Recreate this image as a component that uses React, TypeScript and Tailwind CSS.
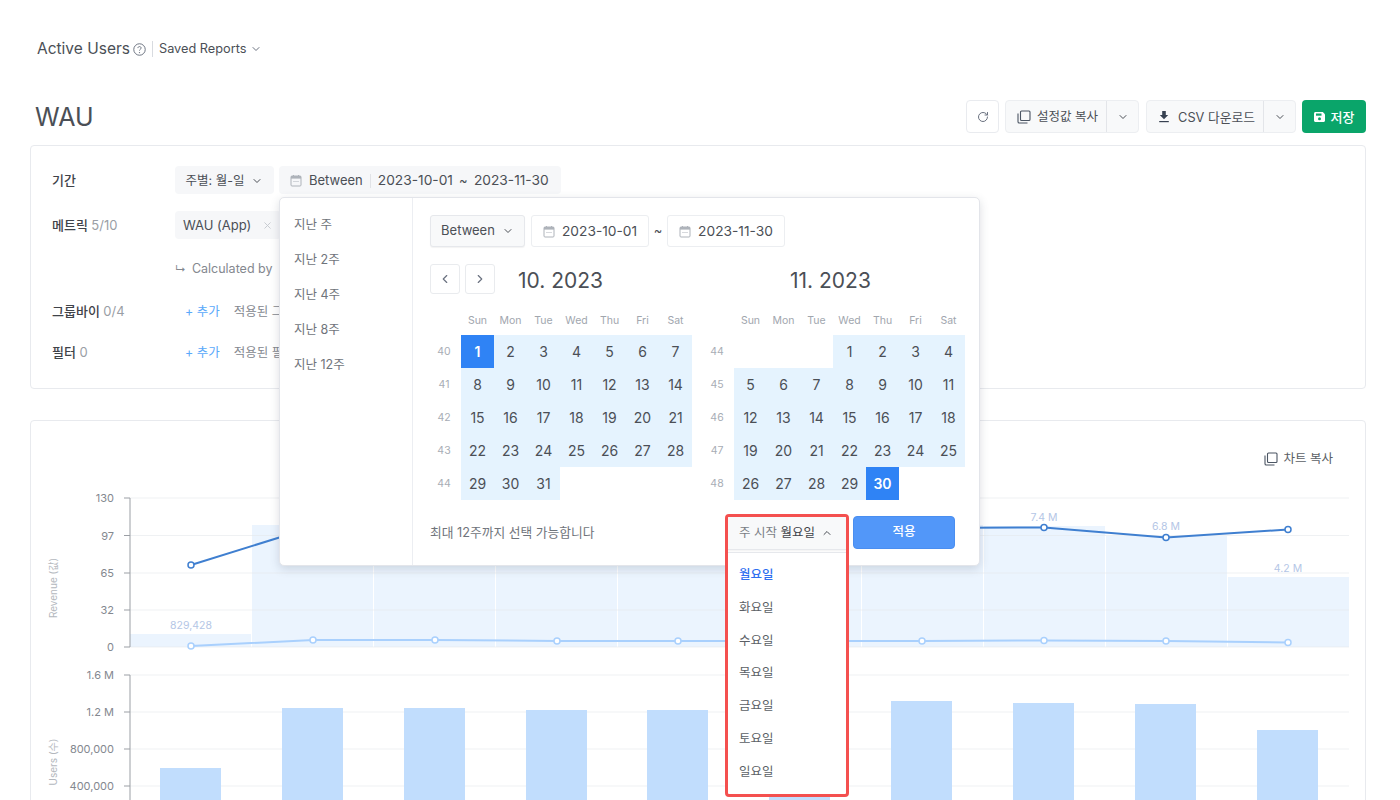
import React from "react";
import { ChevronDown, ChevronUp, ChevronLeft, ChevronRight, RotateCw, X } from "lucide-react";

const Cal = ({ c = "#aeb3ba" }: { c?: string }) => (
  <svg width="12" height="13" viewBox="0 0 12 13" fill="none" className="shrink-0">
    <rect x="1" y="2" width="10" height="10" rx="1" stroke={c} strokeWidth="1" />
    <rect x="1" y="2" width="10" height="2.6" fill={c} />
    <path d="M3.5 7.5h5" stroke={c} strokeWidth="1" strokeDasharray="1 1" />
    <path d="M3.5 1v1.5M8.5 1v1.5" stroke={c} strokeWidth="1" />
  </svg>
);

const CopyIcon = () => (
  <svg width="14" height="14" viewBox="0 0 14 14" fill="none" className="shrink-0">
    <rect x="3.5" y="1" width="9.5" height="9.5" rx="1" stroke="#4b5563" strokeWidth="1.1" />
    <path d="M1 3.5v8.2c0 .7.6 1.3 1.3 1.3h8.2" stroke="#4b5563" strokeWidth="1.1" />
  </svg>
);

const DownloadIcon = () => (
  <svg width="12" height="13" viewBox="0 0 12 13" className="shrink-0">
    <path d="M4.2 1h3.6v4h2.4L6 9.2 1.8 5h2.4z" fill="#374151" />
    <rect x="1.2" y="11" width="9.6" height="1.2" fill="#374151" />
  </svg>
);

const SaveIcon = () => (
  <svg width="12" height="12" viewBox="0 0 12 12" className="shrink-0">
    <path d="M1.5 1h7.3L11 3.2v6.3c0 .8-.7 1.5-1.5 1.5h-8C.7 11 0 10.3 0 9.5v-7C0 1.7.7 1 1.5 1z" fill="#fff" />
    <rect x="2" y="2.5" width="5.5" height="2.2" fill="#0aa56a" />
    <circle cx="5.5" cy="7.7" r="1.5" fill="#0aa56a" />
  </svg>
);

const HelpIcon = () => (
  <svg width="13" height="13" viewBox="0 0 12 12" fill="none" className="shrink-0">
    <circle cx="6" cy="6" r="5.3" stroke="#6b7280" strokeWidth="0.9" />
    <path d="M4.5 4.7c0-.9.7-1.4 1.5-1.4s1.5.5 1.5 1.3c0 1.2-1.5 1.2-1.5 2.4" stroke="#6b7280" strokeWidth="0.9" />
    <circle cx="6" cy="8.8" r="0.6" fill="#6b7280" />
  </svg>
);

const DOW = ["Sun", "Mon", "Tue", "Wed", "Thu", "Fri", "Sat"];

type Month = { weeks: number[]; offset: number; days: number; start?: number; end?: number };

const MonthView = ({ m }: { m: Month }) => {
  const cells: (number | null)[] = [];
  for (let i = 0; i < m.offset; i++) cells.push(null);
  for (let d = 1; d <= m.days; d++) cells.push(d);
  while (cells.length < 35) cells.push(null);
  return (
    <div className="flex">
      <div className="w-[31px] pt-[24px] pr-[3px]">
        {m.weeks.map((w) => (
          <div key={w} className="h-[33px] flex items-center justify-center text-[10.5px] text-[#a8adb5]">{w}</div>
        ))}
      </div>
      <div>
        <div className="grid grid-cols-[repeat(7,33px)] h-[24px] pt-[2px] items-start">
          {DOW.map((d) => (
            <div key={d} className="text-center text-[10.5px] leading-[16px] text-[#a1a6ae]">{d}</div>
          ))}
        </div>
        <div className="grid grid-cols-[repeat(7,33px)] auto-rows-[33px]">
          {cells.map((d, i) =>
            d === null ? (
              <div key={i} />
            ) : d === m.start || d === m.end ? (
              <div key={i} className="flex items-center justify-center bg-[#2f83f5] text-white text-sm font-semibold">{d}</div>
            ) : (
              <div key={i} className="flex items-center justify-center bg-[#e5f3fe] text-[#4b4f56] text-sm">{d}</div>
            )
          )}
        </div>
      </div>
    </div>
  );
};

const xs = [191, 313, 435, 557, 678, 800, 922, 1044, 1166, 1288];
const bandTops = [634, 525, 525, 526, 527, 525, 525, 526, 536, 577];
const bandX = [130, 252, 374, 496, 618, 740, 862, 984, 1106, 1228];
const dark = [565, 527, 527, 528, 529, 530, 528, 527.5, 537.5, 529.5];
const light = [646, 640, 640, 641, 641, 641, 641, 640.5, 641, 642.5];
const barTops = [768, 708, 708, 710, 710, 795, 701, 703, 704, 730];

const Chart = () => (
  <svg width="1334" height="400" viewBox="31 490 1334 400" className="block" fontFamily="Inter, 'Noto Sans CJK KR', sans-serif">
    {bandX.map((x, i) => (
      <rect key={x} x={x} y={bandTops[i]} width={121} height={647 - bandTops[i]} fill="#ebf4fe" />
    ))}
    {[498, 535.5, 573, 610, 647].map((y) => (
      <path key={y} d={`M130 ${y}H1349`} stroke="#e5e7eb" strokeOpacity="0.6" strokeWidth="1" />
    ))}
    {[675, 712, 749, 786, 823].map((y) => (
      <path key={y} d={`M130 ${y}H1349`} stroke="#e5e7eb" strokeOpacity="0.6" strokeWidth="1" />
    ))}
    <path d="M130 498V647M124 498H130M124 535.5H130M124 573H130M124 610H130M124 647H130" stroke="#9b9fa5" fill="none" />
    <path d="M130 675V820M124 675H130M124 712H130M124 749H130M124 786H130" stroke="#9b9fa5" fill="none" />
    {[["130", 498], ["97", 536], ["65", 573], ["32", 610], ["0", 647], ["1.6 M", 675], ["1.2 M", 712], ["800,000", 749], ["400,000", 786]].map(([t, y]) => (
      <text key={String(t)} x="114" y={Number(y) + 4} textAnchor="end" fontSize="11" fill="#84888f">{t}</text>
    ))}
    <text transform="translate(57 588) rotate(-90)" textAnchor="middle" fontSize="10" fill="#b3b7bd">Revenue (값)</text>
    <text transform="translate(57 762) rotate(-90)" textAnchor="middle" fontSize="10" fill="#b3b7bd">Users (수)</text>
    {xs.map((x, i) => (
      <rect key={x} x={x - 31} y={barTops[i]} width={61} height={840 - barTops[i]} fill="#c1ddfd" />
    ))}
    <polyline points={xs.map((x, i) => `${x},${light[i]}`).join(" ")} fill="none" stroke="#a9d0fd" strokeWidth="2" />
    {xs.map((x, i) => (
      <circle key={x} cx={x} cy={light[i]} r="3" fill="#fff" stroke="#a9d0fd" strokeWidth="1.5" />
    ))}
    <polyline points={xs.map((x, i) => `${x},${dark[i]}`).join(" ")} fill="none" stroke="#3f7fd0" strokeWidth="2" />
    {xs.map((x, i) => (
      <circle key={x} cx={x} cy={dark[i]} r="3" fill="#fff" stroke="#3f7fd0" strokeWidth="1.5" />
    ))}
    {[["829,428", 191, 629], ["7.4 M", 1044, 521], ["6.8 M", 1166, 530], ["4.2 M", 1288, 572]].map(([t, x, y]) => (
      <text key={String(t)} x={Number(x)} y={Number(y)} textAnchor="middle" fontSize="10.5" fill="#b4c6e6">{t}</text>
    ))}
  </svg>
);

export default function App() {
  return (
    <div className="relative h-[800px] w-[1400px] overflow-hidden bg-white text-[#4b4f56] [font-family:Inter,'Noto_Sans_CJK_KR',sans-serif]">
      <div className="flex items-center pl-[37px] pt-[29px] h-[69px]">
        <span className="text-[15.5px] leading-[22px] text-[#4b4f56]">Active Users</span>
        <span className="ml-[3px] pt-px"><HelpIcon /></span>
        <span className="ml-[6px] mr-[6px] h-[16px] w-px bg-[#d8dbe0]" />
        <span className="text-[12.75px] text-[#4b4f56]">Saved Reports</span>
        <ChevronDown className="ml-[3px] w-[12px] h-[12px] text-[#6b7280]" />
      </div>

      <div className="flex items-center justify-between pl-[35px] pr-[34px] mt-[31px] h-[33px]">
        <div className="text-[25px] text-[#4b4f56] leading-[33px] pt-[2px]">WAU</div>
        <div className="flex gap-[6px] h-[33px] text-[12.5px]">
          <div className="w-[33px] flex items-center justify-center rounded-[4px] border border-[#e9ebef] bg-white">
            <RotateCw className="w-[12px] h-[12px] text-[#6b7280]" />
          </div>
          <div className="w-[134px] mr-px flex rounded-[4px] border border-[#eceef1] bg-[#f8f9fa]">
            <div className="w-[100px] pl-[3px] flex items-center justify-center gap-[6px]"><CopyIcon /><span className="pt-[2px]">설정값 복사</span></div>
            <div className="flex-1 flex items-center justify-center border-l border-[#e3e5e9]"><ChevronDown className="w-[12px] h-[12px]" /></div>
          </div>
          <div className="w-[150px] flex rounded-[4px] border border-[#eceef1] bg-[#f8f9fa]">
            <div className="w-[116px] pl-[3px] flex items-center justify-center gap-[8px]"><DownloadIcon /><span className="pt-[2px] text-[12.75px]">CSV 다운로드</span></div>
            <div className="flex-1 flex items-center justify-center border-l border-[#e3e5e9]"><ChevronDown className="w-[12px] h-[12px]" /></div>
          </div>
          <div className="w-[64px] flex items-center justify-center gap-[5px] rounded-[4px] bg-[#0aa56a] text-white text-[13px] font-medium"><SaveIcon /><span className="pt-[2px]">저장</span></div>
        </div>
      </div>

      <div className="relative ml-[30px] mr-[34px] mt-[12px] h-[244px] rounded-[4px] border border-[#e8eaee] px-[21px] pt-[20px]">
        <div className="flex items-center h-[28px]">
          <div className="w-[123px] pt-[2px] text-[13px] font-medium text-[#3f4349]">기간</div>
          <div className="flex items-center gap-[5px] h-full">
            <div className="w-[99px] h-full pt-[2px] rounded-[4px] bg-[#f6f7f9] flex items-center justify-center gap-[7px] text-[12.5px]">주별: 월-일<ChevronDown className="w-[12px] h-[12px]" /></div>
            <div className="w-[282px] h-full pt-px rounded-[4px] bg-[#f6f7f9] flex items-center pl-[11px] text-[13px] whitespace-nowrap">
              <Cal />
              <span className="ml-[7px]">Between</span>
              <span className="mx-[7px] h-[14px] w-px bg-[#e1e3e7]" />
              <span className="text-[13.75px]">2023-10-01</span>
              <span className="w-[21px] text-center">~</span>
              <span className="text-[13.75px]">2023-11-30</span>
            </div>
          </div>
        </div>
        <div className="flex items-center h-[28px] mt-[17px]">
          <div className="w-[123px] pt-[2px] text-[13px] font-medium text-[#3f4349]">메트릭 <span className="font-normal text-[#9a9ea5]">5/10</span></div>
          <div className="w-[106px] h-full pt-px rounded-[4px] bg-[#f6f7f9] flex items-center pl-[8px] text-[13px]">WAU (App)<X className="ml-[11px] w-[11px] h-[11px] text-[#c4c8ce]" /></div>
        </div>
        <div className="flex items-center h-[20px] mt-[20px] pl-[123px] pt-px text-[12.5px] text-[#84888f]">
          <span className="mr-[6px] text-[11px]">↳</span>Calculated by
        </div>
        <div className="flex items-center h-[20px] mt-[22px] pt-[2px]">
          <div className="w-[133px] text-[13px] font-medium text-[#3f4349]">그룹바이 <span className="font-normal text-[#9a9ea5]">0/4</span></div>
          <span className="text-[12.5px] text-[#5aa9fa]">+ 추가</span>
          <span className="ml-[14px] text-[12.5px] text-[#84888f]">적용된 그</span>
        </div>
        <div className="flex items-center h-[20px] mt-[21px] pt-[2px]">
          <div className="w-[133px] text-[13px] font-medium text-[#3f4349]">필터 <span className="font-normal text-[#9a9ea5]">0</span></div>
          <span className="text-[12.5px] text-[#5aa9fa]">+ 추가</span>
          <span className="ml-[14px] text-[12.5px] text-[#84888f]">적용된 필</span>
        </div>
      </div>

      <div className="ml-[30px] mr-[34px] mt-[31px] h-[500px] rounded-[4px] border border-[#e8eaee] overflow-hidden">
        <div className="h-[69px] flex justify-end items-start pr-[32px] pt-[29px] text-[12.5px] text-[#5b5f66]">
          <span className="flex items-center gap-[5px]"><CopyIcon />차트 복사</span>
        </div>
        <Chart />
      </div>

      <div className="absolute left-[279px] top-[197px] w-[701px] h-[369px] flex rounded-[5px] border border-[#e3e5ea] bg-white shadow-[0_3px_10px_rgba(60,70,90,0.18)]">
        <div className="w-[133px] shrink-0 pt-[10px] pl-[14px] border-r border-[#eceef2]">
          {["지난 주", "지난 2주", "지난 4주", "지난 8주", "지난 12주"].map((t) => (
            <div key={t} className="h-[35px] flex items-center text-[12.5px] text-[#6f747b]">{t}</div>
          ))}
        </div>
        <div className="pl-[17px] pt-[17px] flex-1">
          <div className="flex items-center h-[32px]">
            <div className="w-[95px] h-full rounded-[3px] border border-[#e6e8ec] bg-[#f8f9fa] shadow-[0_1px_1px_rgba(0,0,0,0.05)] flex items-center justify-center gap-[7px] text-[13px]">Between<ChevronDown className="w-[12px] h-[12px]" /></div>
            <div className="ml-[6px] w-[118px] h-full rounded-[3px] border border-[#eceef1] flex items-center justify-center gap-[7px] text-[13.75px] whitespace-nowrap"><Cal />2023-10-01</div>
            <span className="w-[18px] text-center text-[13px]">~</span>
            <div className="w-[118px] h-full rounded-[3px] border border-[#eceef1] flex items-center justify-center gap-[7px] text-[13.75px] whitespace-nowrap"><Cal />2023-11-30</div>
          </div>
          <div className="flex items-center h-[30px] mt-[17px]">
            <div className="w-[30px] h-full rounded-[3px] border border-[#e9ebee] flex items-center justify-center"><ChevronLeft className="w-[14px] h-[14px] text-[#6b7280]" /></div>
            <div className="ml-[5px] w-[30px] h-full rounded-[3px] border border-[#e9ebee] flex items-center justify-center"><ChevronRight className="w-[14px] h-[14px] text-[#6b7280]" /></div>
            <div className="ml-[23px] w-[272px] pt-[3px] text-[21px] text-[#4b4f56]">10. 2023</div>
            <div className="pt-[3px] text-[21px] text-[#4b4f56]">11. 2023</div>
          </div>
          <div className="flex gap-[11px] mt-[17px]">
            <MonthView m={{ weeks: [40, 41, 42, 43, 44], offset: 0, days: 31, start: 1 }} />
            <MonthView m={{ weeks: [44, 45, 46, 47, 48], offset: 3, days: 30, end: 30 }} />
          </div>
          <div className="flex items-center justify-between mt-[16px] h-[33px] pr-[24px]">
            <span className="text-[12.75px] text-[#6f747b]">최대 12주까지 선택 가능합니다</span>
            <div className="w-[102px] h-[33px] rounded-[4px] bg-[#5297f9] border border-[#4a8ef0] text-white text-[12.5px] font-medium flex items-center justify-center">적용</div>
          </div>
        </div>
      </div>

      <div className="absolute left-[725px] top-[514px] w-[124px] h-[283px] rounded-[4px] border-[3px] border-[#f4504f] bg-white overflow-hidden">
        <div className="h-[33px] bg-[#f8f9fa] flex items-center pl-[11px] gap-[6px] text-[12.5px] border-b border-[#e6e8ec] shadow-[0_1px_2px_rgba(0,0,0,0.06)]">
          <span className="text-[#7a7e85]">주 시작 <span className="text-[#3f4349]">월요일</span></span>
          <ChevronUp className="w-[12px] h-[12px]" />
        </div>
        <div className="pt-[6px] border-t border-[#e6e8ec] mt-[2px]">
          {["월요일", "화요일", "수요일", "목요일", "금요일", "토요일", "일요일"].map((t, i) => (
            <div key={t} className={i === 0 ? "h-[32.8px] pl-[11px] flex items-center text-[12.5px] font-medium text-[#2f6ff0]" : "h-[32.8px] pl-[11px] flex items-center text-[12.5px] text-[#5b5f66]"}>{t}</div>
          ))}
        </div>
      </div>
    </div>
  );
}
